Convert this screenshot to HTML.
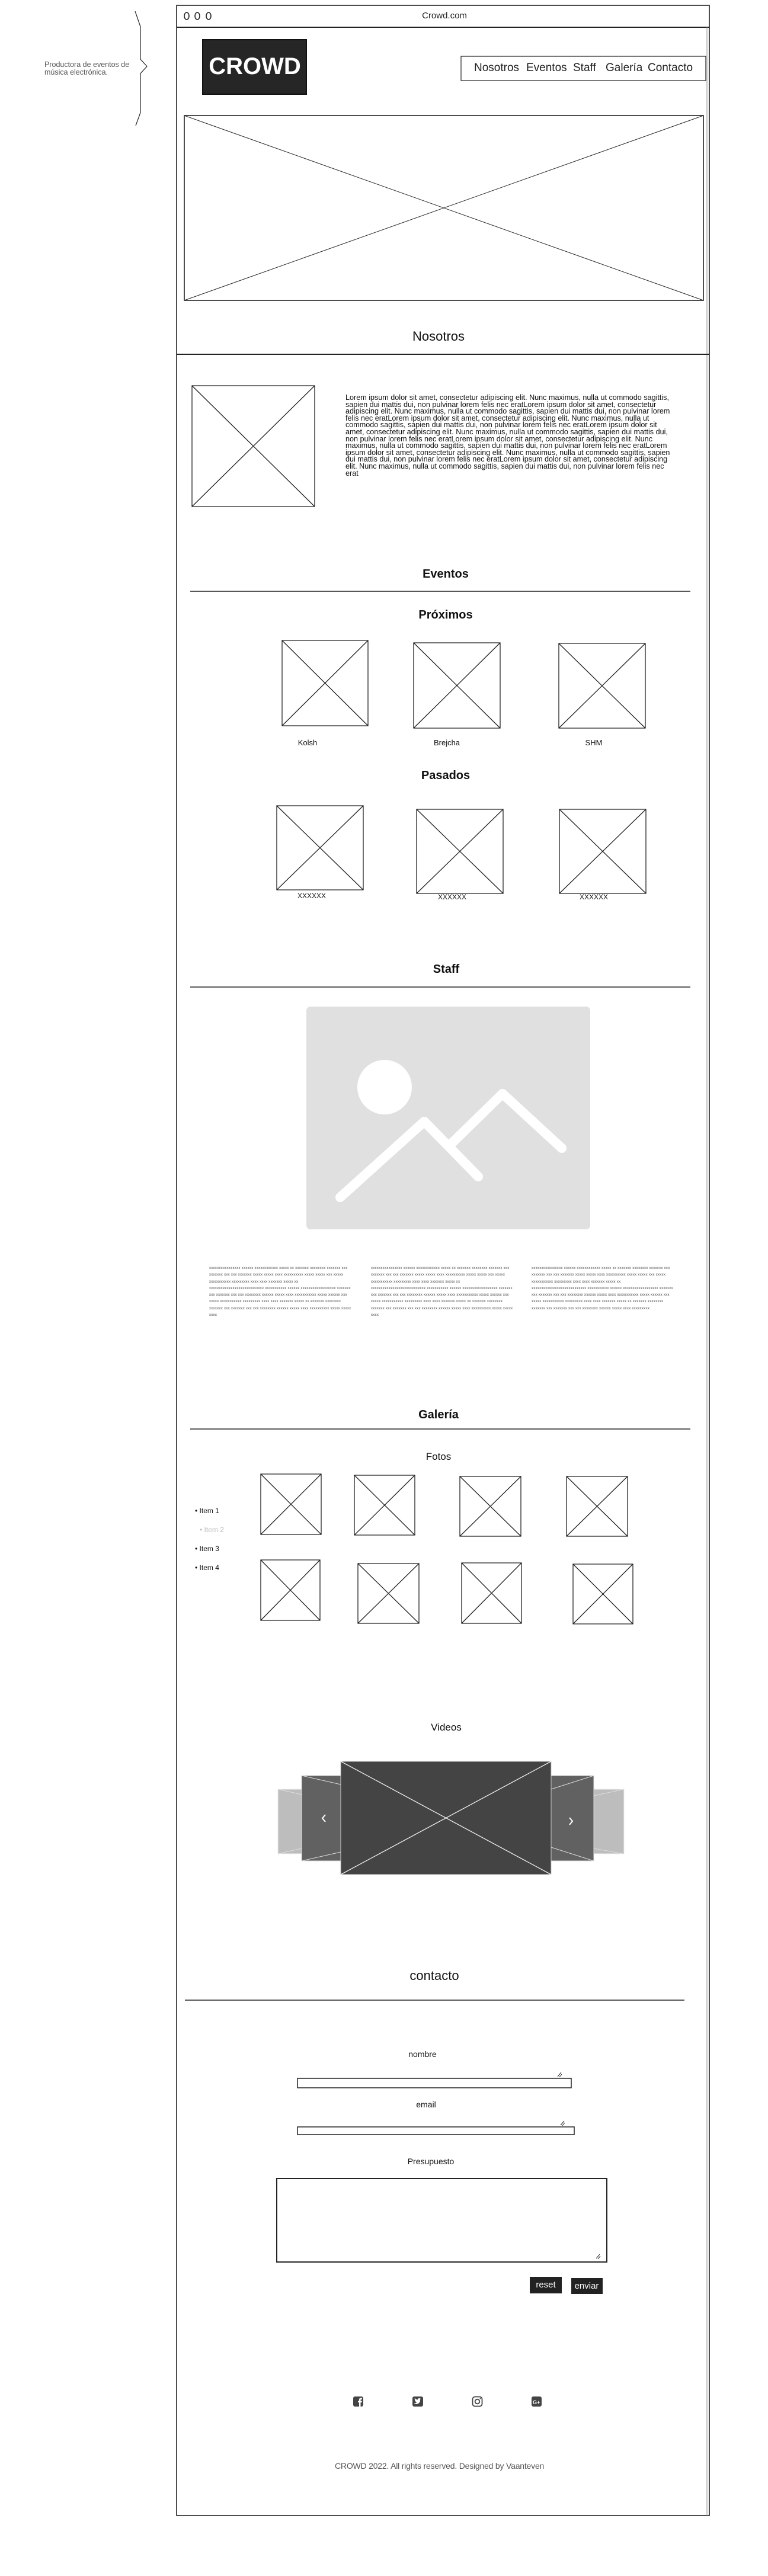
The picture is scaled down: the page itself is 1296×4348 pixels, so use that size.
<!DOCTYPE html>
<html><head><meta charset="utf-8"><style>
*{margin:0;padding:0;box-sizing:border-box}
body{width:1296px;height:4348px;background:#fff;position:relative;font-family:"Liberation Sans",sans-serif;color:#111;overflow:hidden}
.a{position:absolute;white-space:nowrap}
.c{transform:translateX(-50%)}
.h{font-size:20px;font-weight:bold}
.lorem{position:absolute;left:583px;top:666px;width:560px;font-size:12.6px;line-height:11.6px;color:#111;white-space:normal}
.sq{position:absolute;top:2136px;width:240px;font-size:6px;line-height:11.3px;color:#444;white-space:normal;letter-spacing:0.3px}
.nav{font-family:"Liberation Sans Narrow","Liberation Sans",sans-serif;font-size:19px;color:#222}
</style></head><body>
<svg class="a" style="left:0;top:0" width="1296" height="4348" xmlns="http://www.w3.org/2000/svg">
<g fill="none" stroke="#222" stroke-width="1.6">
<rect x="298" y="9" width="899" height="4237"/>
<line x1="298" y1="46" x2="1197" y2="46" stroke-width="2"/>
<line x1="1193" y1="46" x2="1193" y2="4246" stroke="#888" stroke-width="1"/>
<ellipse cx="315" cy="27" rx="4" ry="6"/><ellipse cx="333" cy="27" rx="4" ry="6"/><ellipse cx="352" cy="27" rx="4" ry="6"/>
<path d="M228 19 L237 45 L237 100 L248 112 L237 124 L237 190 L229 212" stroke-width="1.2"/>
<rect x="778" y="95" width="413" height="41" stroke-width="1.2"/>
<rect x="311" y="195" width="876" height="312"/>
<line x1="311" y1="195" x2="1187" y2="507" stroke-width="1"/><line x1="1187" y1="195" x2="311" y2="507" stroke-width="1"/>
<line x1="298" y1="598" x2="1197" y2="598" stroke-width="2"/>
<line x1="321" y1="998" x2="1165" y2="998"/>
<line x1="321" y1="1666" x2="1165" y2="1666"/>
<line x1="321" y1="2412" x2="1165" y2="2412"/>
<line x1="312" y1="3376" x2="1155" y2="3376"/>
</g>
<g fill="none" stroke="#222" stroke-width="1.3">
<path d="M324 651h207v204h-207z M324 651L531 855 M531 651L324 855"/>
<path d="M476 1081h145v144h-145z M476 1081L621 1225 M621 1081L476 1225"/>
<path d="M698 1085h146v144h-146z M698 1085L844 1229 M844 1085L698 1229"/>
<path d="M943 1086h146v143h-146z M943 1086L1089 1229 M1089 1086L943 1229"/>
<path d="M467 1360h146v142h-146z M467 1360L613 1502 M613 1360L467 1502"/>
<path d="M703 1366h146v142h-146z M703 1366L849 1508 M849 1366L703 1508"/>
<path d="M944 1366h146v142h-146z M944 1366L1090 1508 M1090 1366L944 1508"/>
<path d="M440 2488h102v102h-102z M440 2488L542 2590 M542 2488L440 2590"/>
<path d="M598 2490h102v101h-102z M598 2490L700 2591 M700 2490L598 2591"/>
<path d="M776 2492h103v101h-103z M776 2492L879 2593 M879 2492L776 2593"/>
<path d="M956 2492h103v101h-103z M956 2492L1059 2593 M1059 2492L956 2593"/>
<path d="M440 2633h100v102h-100z M440 2633L540 2735 M540 2633L440 2735"/>
<path d="M604 2639h103v101h-103z M604 2639L707 2740 M707 2639L604 2740"/>
<path d="M779 2638h101v102h-101z M779 2638L880 2740 M880 2638L779 2740"/>
<path d="M967 2640h101v101h-101z M967 2640L1068 2741 M1068 2640L967 2741"/>
</g>
<rect x="517" y="1699" width="479" height="376" rx="7" fill="#e0e0e0"/>
<circle cx="649" cy="1835" r="46" fill="#fff"/>
<polyline points="574,2021 716,1893 807,1986" fill="none" stroke="#fff" stroke-width="16" stroke-linecap="round" stroke-linejoin="round"/>
<polyline points="760,1932 848,1846 948,1938" fill="none" stroke="#fff" stroke-width="16" stroke-linecap="round" stroke-linejoin="round"/>
<rect x="469" y="3020" width="40" height="109" fill="#bdbdbd" stroke="#eee"/>
<rect x="1002" y="3020" width="51" height="109" fill="#bdbdbd" stroke="#eee"/>
<rect x="509" y="2997" width="66" height="144" fill="#616161" stroke="#ddd"/>
<rect x="930" y="2997" width="72" height="144" fill="#616161" stroke="#ddd"/>
<g stroke="#ddd" stroke-width="1"><line x1="509" y1="2997" x2="575" y2="3012"/><line x1="509" y1="3141" x2="575" y2="3126"/><line x1="1002" y1="2997" x2="930" y2="3020"/><line x1="1002" y1="3141" x2="930" y2="3118"/><line x1="469" y1="3020" x2="509" y2="3029"/><line x1="469" y1="3129" x2="509" y2="3120"/><line x1="1053" y1="3020" x2="1002" y2="3031"/><line x1="1053" y1="3129" x2="1002" y2="3120"/></g>
<rect x="575" y="2973" width="355" height="191" fill="#444" stroke="#ccc"/>
<g stroke="#eee" stroke-width="1.3"><line x1="575" y1="2973" x2="930" y2="3164"/><line x1="930" y1="2973" x2="575" y2="3164"/></g>
<path d="M549 3063l-5 6 5 6" fill="none" stroke="#fff" stroke-width="2"/>
<path d="M961 3068l5 6 -5 6" fill="none" stroke="#fff" stroke-width="2"/>
<g fill="none" stroke="#222" stroke-width="1.5">
<rect x="502" y="3508" width="462" height="16"/>
<rect x="502" y="3590" width="467" height="13"/>
<rect x="467" y="3677" width="557" height="141" stroke-width="2"/>
<path d="M941 3505l6-7M944 3506l4-5M946 3587l6-7M949 3588l4-5M1006 3812l6-7M1009 3813l4-5" stroke-width="1"/>
</g>
<rect x="894" y="3843" width="54" height="28" fill="#222"/>
<rect x="964" y="3845" width="53" height="27" fill="#222"/>
<rect x="596" y="4045" width="17" height="17" rx="3" fill="#444"/>
<path d="M606 4062v-7h-2v-2.5h2v-2c0-2 1-3 3-3h2v2.5h-1.5c-.6 0-1 .3-1 1v1.5h2.5l-.4 2.5h-2.1v7z" fill="#fff"/>
<rect x="696" y="4045" width="18" height="17" rx="3" fill="#444"/>
<path d="M699 4057c3 2 8 1 10-4v-3l1.5-1.5-1.5.3c-1-1.6-4-1-4 1.5-2 0-4-1-5-2.5-.7 1.4 0 3 1 3.5h-1c.2 1.3 1 2 2 2.3h-1c.4 1 1.5 1.6 2.5 1.6-1.3 1-3 1.4-4.5 1.3z" fill="#fff"/>
<rect x="797.5" y="4045.5" width="16" height="16" rx="4" fill="none" stroke="#444" stroke-width="1.8"/>
<circle cx="805.5" cy="4053.5" r="3.8" fill="none" stroke="#444" stroke-width="1.8"/>
<circle cx="810.5" cy="4048.5" r="1" fill="#444"/>
<rect x="897" y="4045" width="17" height="17" rx="3" fill="#444"/>
<text x="899" y="4058" font-family="Liberation Sans" font-size="9" font-weight="bold" fill="#fff">G+</text>
</svg>

<div class="a c" style="left:750px;top:18px;font-size:15px;color:#222">Crowd.com</div>
<div class="a" style="left:75px;top:103px;font-size:12.5px;line-height:13px;color:#555;font-family:'Liberation Sans Narrow','Liberation Sans',sans-serif">Productora de eventos de<br>música electrónica.</div>
<div class="a" style="left:341px;top:66px;width:177px;height:94px;background:#262626;border:2px solid #111"></div>
<div class="a c" style="left:430px;top:90px;font-size:40px;font-weight:bold;color:#fff;font-family:'Liberation Sans Narrow','Liberation Sans',sans-serif">CROWD</div>
<div class="a nav" style="left:800px;top:104px">Nosotros</div>
<div class="a nav" style="left:888px;top:104px">Eventos</div>
<div class="a nav" style="left:967px;top:104px">Staff</div>
<div class="a nav" style="left:1022px;top:104px">Galería</div>
<div class="a nav" style="left:1093px;top:104px">Contacto</div>

<div class="a c" style="left:740px;top:555px;font-size:22px">Nosotros</div>
<div class="lorem">Lorem ipsum dolor sit amet, consectetur adipiscing elit. Nunc maximus, nulla ut commodo sagittis, sapien dui mattis dui, non pulvinar lorem felis nec eratLorem ipsum dolor sit amet, consectetur adipiscing elit. Nunc maximus, nulla ut commodo sagittis, sapien dui mattis dui, non pulvinar lorem felis nec eratLorem ipsum dolor sit amet, consectetur adipiscing elit. Nunc maximus, nulla ut commodo sagittis, sapien dui mattis dui, non pulvinar lorem felis nec eratLorem ipsum dolor sit amet, consectetur adipiscing elit. Nunc maximus, nulla ut commodo sagittis, sapien dui mattis dui, non pulvinar lorem felis nec eratLorem ipsum dolor sit amet, consectetur adipiscing elit. Nunc maximus, nulla ut commodo sagittis, sapien dui mattis dui, non pulvinar lorem felis nec eratLorem ipsum dolor sit amet, consectetur adipiscing elit. Nunc maximus, nulla ut commodo sagittis, sapien dui mattis dui, non pulvinar lorem felis nec eratLorem ipsum dolor sit amet, consectetur adipiscing elit. Nunc maximus, nulla ut commodo sagittis, sapien dui mattis dui, non pulvinar lorem felis nec erat</div>

<div class="a c h" style="left:752px;top:958px">Eventos</div>
<div class="a c h" style="left:752px;top:1027px">Próximos</div>
<div class="a c" style="left:519px;top:1246px;font-size:13px">Kolsh</div>
<div class="a c" style="left:754px;top:1246px;font-size:13px">Brejcha</div>
<div class="a c" style="left:1002px;top:1246px;font-size:13px">SHM</div>
<div class="a c h" style="left:752px;top:1298px">Pasados</div>
<div class="a c" style="left:526px;top:1505px;font-size:12px">XXXXXX</div>
<div class="a c" style="left:763px;top:1507px;font-size:12px">XXXXXX</div>
<div class="a c" style="left:1002px;top:1507px;font-size:12px">XXXXXX</div>

<div class="a c h" style="left:753px;top:1625px">Staff</div>
<div class="sq" style="left:353px">xxxxxxxxxxxxxxxx xxxxxx xxxxxxxxxxxx xxxxx xx xxxxxxx xxxxxxxx xxxxxxx xxx xxxxxxx xxx xxx xxxxxxx xxxxx xxxxx xxxx xxxxxxxxxx xxxxx xxxxx xxx xxxxx xxxxxxxxxxx xxxxxxxxx xxxx xxxx xxxxxxx xxxxx xx xxxxxxxxxxxxxxxxxxxxxxxxxxxx xxxxxxxxxxx xxxxxx xxxxxxxxxxxxxxxxxx xxxxxxx xxx xxxxxxx xxx xxx xxxxxxxx xxxxxx xxxxx xxxx xxxxxxxxxxx xxxxx xxxxxx xxx xxxxx xxxxxxxxxxx xxxxxxxxx xxxx xxxx xxxxxxx xxxxx xx xxxxxxx xxxxxxxx xxxxxxx xxx xxxxxxx xxx xxx xxxxxxxx xxxxxx xxxxx xxxx xxxxxxxxxx xxxxx xxxxx xxxx</div>
<div class="sq" style="left:626px">xxxxxxxxxxxxxxxx xxxxxx xxxxxxxxxxxx xxxxx xx xxxxxxx xxxxxxxx xxxxxxx xxx xxxxxxx xxx xxx xxxxxxx xxxxx xxxxx xxxx xxxxxxxxxx xxxxx xxxxx xxx xxxxx xxxxxxxxxxx xxxxxxxxx xxxx xxxx xxxxxxx xxxxx xx xxxxxxxxxxxxxxxxxxxxxxxxxxxx xxxxxxxxxxx xxxxxx xxxxxxxxxxxxxxxxxx xxxxxxx xxx xxxxxxx xxx xxx xxxxxxxx xxxxxx xxxxx xxxx xxxxxxxxxxx xxxxx xxxxxx xxx xxxxx xxxxxxxxxxx xxxxxxxxx xxxx xxxx xxxxxxx xxxxx xx xxxxxxx xxxxxxxx xxxxxxx xxx xxxxxxx xxx xxx xxxxxxxx xxxxxx xxxxx xxxx xxxxxxxxxx xxxxx xxxxx xxxx</div>
<div class="sq" style="left:897px">xxxxxxxxxxxxxxxx xxxxxx xxxxxxxxxxxx xxxxx xx xxxxxxx xxxxxxxx xxxxxxx xxx xxxxxxx xxx xxx xxxxxxx xxxxx xxxxx xxxx xxxxxxxxxx xxxxx xxxxx xxx xxxxx xxxxxxxxxxx xxxxxxxxx xxxx xxxx xxxxxxx xxxxx xx xxxxxxxxxxxxxxxxxxxxxxxxxxxx xxxxxxxxxxx xxxxxx xxxxxxxxxxxxxxxxxx xxxxxxx xxx xxxxxxx xxx xxx xxxxxxxx xxxxxx xxxxx xxxx xxxxxxxxxxx xxxxx xxxxxx xxx xxxxx xxxxxxxxxxx xxxxxxxxx xxxx xxxx xxxxxxx xxxxx xx xxxxxxx xxxxxxxx xxxxxxx xxx xxxxxxx xxx xxx xxxxxxxx xxxxxx xxxxx xxxx xxxxxxxxx</div>

<div class="a c h" style="left:740px;top:2377px">Galería</div>
<div class="a c" style="left:740px;top:2449px;font-size:17px">Fotos</div>
<div class="a" style="left:329px;top:2543px;font-size:12px">• Item 1</div>
<div class="a" style="left:337px;top:2575px;font-size:12px;color:#bbb">• Item 2</div>
<div class="a" style="left:329px;top:2607px;font-size:12px">• Item 3</div>
<div class="a" style="left:329px;top:2639px;font-size:12px">• Item 4</div>

<div class="a c" style="left:753px;top:2906px;font-size:17px">Videos</div>

<div class="a c" style="left:733px;top:3322px;font-size:22px">contacto</div>
<div class="a c" style="left:713px;top:3459px;font-size:14px">nombre</div>
<div class="a c" style="left:719px;top:3544px;font-size:14px">email</div>
<div class="a c" style="left:727px;top:3640px;font-size:14px">Presupuesto</div>
<div class="a c" style="left:921px;top:3848px;font-size:15px;color:#fff">reset</div>
<div class="a c" style="left:990px;top:3850px;font-size:15px;color:#fff">enviar</div>

<div class="a" style="left:565px;top:4154px;font-size:14px;color:#555;letter-spacing:-0.2px">CROWD 2022. All rights reserved. Designed by Vaanteven</div>
</body></html>
